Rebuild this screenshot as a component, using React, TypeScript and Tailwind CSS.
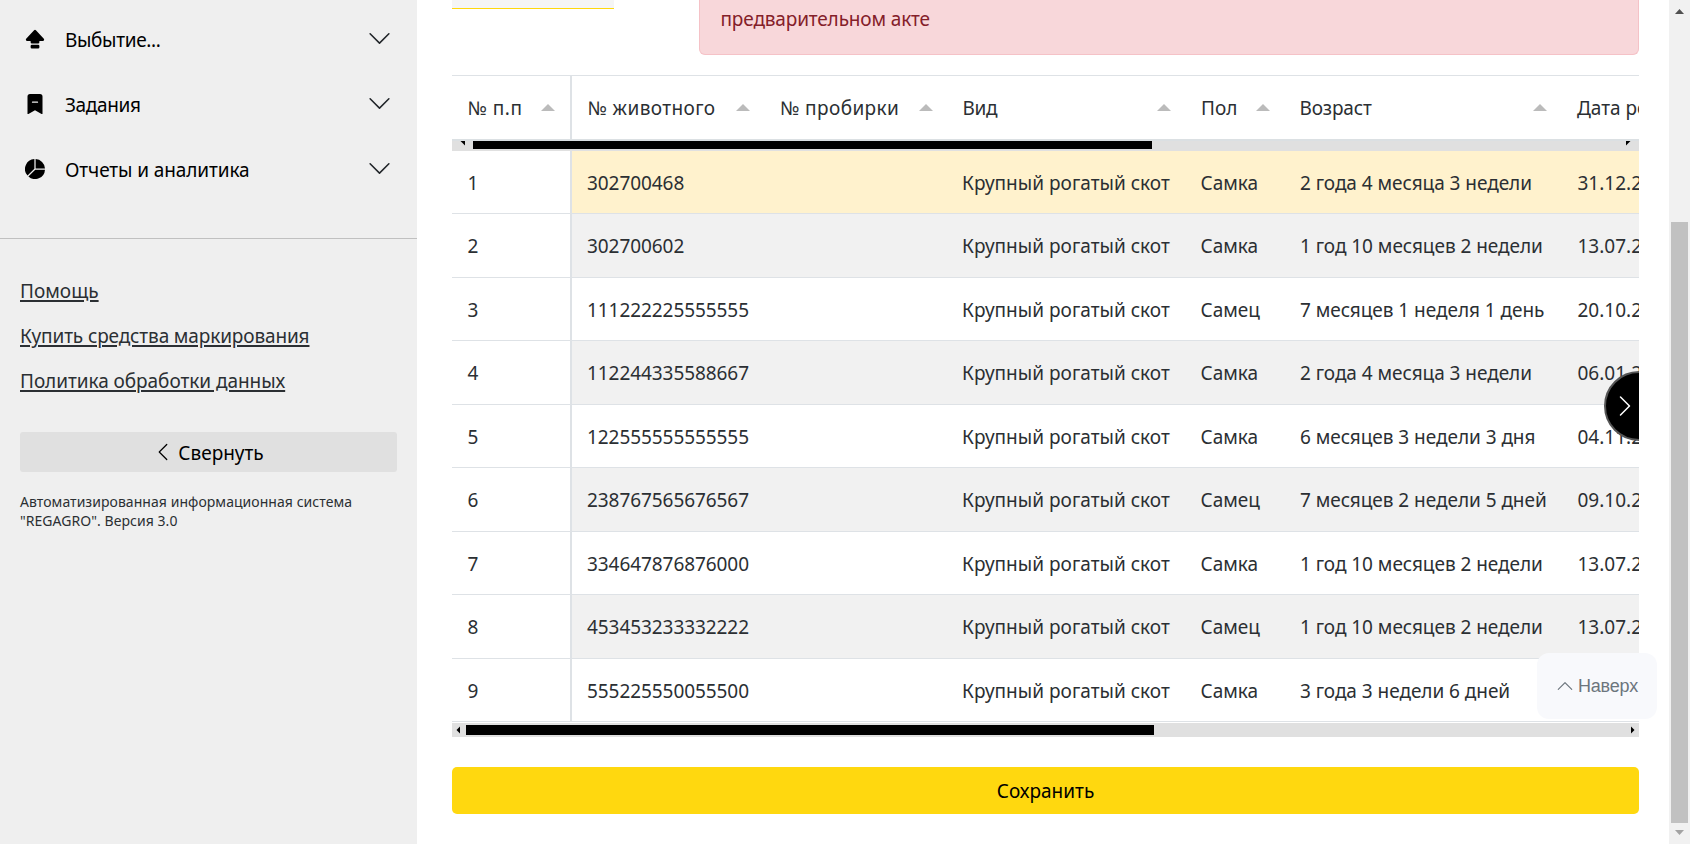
import type { ReactNode } from "react";
import {
  BsBookmarkDashFill,
  BsCapslockFill,
  BsChevronDown,
  BsChevronLeft,
  BsChevronRight,
  BsChevronUp,
  BsPieChartFill,
} from "react-icons/bs";

const menu: { icon: ReactNode; label: string; cls: string }[] = [
  { icon: <BsCapslockFill size={20} />, label: "Выбытие...", cls: "tracking-[-0.34px]" },
  { icon: <BsBookmarkDashFill size={20} />, label: "Задания", cls: "tracking-[-0.34px]" },
  { icon: <BsPieChartFill size={20} />, label: "Отчеты и аналитика", cls: "tracking-[-0.1px]" },
];

const links = [
  { label: "Помощь", cls: "tracking-[0.02px]" },
  { label: "Купить средства маркирования", cls: "tracking-[-0.13px]" },
  { label: "Политика обработки данных", cls: "tracking-[-0.05px]" },
];

const columns = [
  { label: "№ п.п", cls: "tracking-[0.5px]" },
  { label: "№ животного", cls: "tracking-[0.4px]" },
  { label: "№ пробирки", cls: "tracking-[0.4px]" },
  { label: "Вид", cls: "tracking-[-0.35px]" },
  { label: "Пол", cls: "" },
  { label: "Возраст", cls: "tracking-[-0.15px]" },
  { label: "Дата рождения", cls: "" },
];

const species = "Крупный рогатый скот";

const rows = [
  ["302700468", "Самка", "2 года 4 месяца 3 недели", "31.12.2021"],
  ["302700602", "Самка", "1 год 10 месяцев 2 недели", "13.07.2022"],
  ["111222225555555", "Самец", "7 месяцев 1 неделя 1 день", "20.10.2023"],
  ["112244335588667", "Самка", "2 года 4 месяца 3 недели", "06.01.2022"],
  ["122555555555555", "Самка", "6 месяцев 3 недели 3 дня", "04.11.2023"],
  ["238767565676567", "Самец", "7 месяцев 2 недели 5 дней", "09.10.2023"],
  ["334647876876000", "Самка", "1 год 10 месяцев 2 недели", "13.07.2022"],
  ["453453233332222", "Самец", "1 год 10 месяцев 2 недели", "13.07.2022"],
  ["555225550055500", "Самка", "3 года 3 недели 6 дней", ""],
];

const grid = "grid w-[1400px] grid-cols-[120px_192.5px_182.5px_238.5px_98.5px_277.5px_1fr]";

function Sidebar() {
  return (
    <aside className="flex h-full w-[417px] shrink-0 flex-col bg-[#efefef]">
      <nav className="flex h-[239px] flex-col border-b border-[#c0c0c0] pt-[7px] text-black">
        {menu.map((m) => (
          <div key={m.label} className="flex h-[65px] items-center px-[25px] pb-[2px]">
            {m.icon}
            <span className={`ml-5 flex-1 pt-1 ${m.cls}`}>{m.label}</span>
            <BsChevronDown size={25} className="text-[#212529]" />
          </div>
        ))}
      </nav>
      <div className="flex flex-col px-5 pt-[30px]">
        {links.map((l) => (
          <a
            key={l.label}
            className={`h-[45px] self-start leading-[45px] underline decoration-2 underline-offset-[2px] ${l.cls}`}
          >
            {l.label}
          </a>
        ))}
        <button className="mt-7 flex h-10 items-center justify-center rounded-[3px] bg-[#e0e0e0] text-black">
          <BsChevronLeft size={20} className="mr-[5px]" />
          <span className="pt-[3px]">Свернуть</span>
        </button>
        <p className="mt-5 text-[14px] leading-[19px] tracking-[0.05px]">
          Автоматизированная информационная система "REGAGRO". Версия 3.0
        </p>
      </div>
    </aside>
  );
}

function SortArrow() {
  return (
    <svg width="14" height="7" viewBox="0 0 14 7" className="shrink-0">
      <path d="M7 0L14 7H0Z" fill="#bbbbbb" />
    </svg>
  );
}

function AnimalTable() {
  return (
    <div className="relative mt-5 overflow-hidden">
      <div className={`${grid} h-16 border-t border-[#dee2e6]`}>
        {columns.map((c, i) => (
          <div
            key={c.label}
            className={`flex items-center justify-between pl-[15.5px] whitespace-nowrap ${
              i === 0 ? "border-r-2 border-[#dee2e6] pr-[15px]" : "pr-[14.5px]"
            }`}
          >
            <span className={`pt-[2px] ${c.cls}`}>{c.label}</span>
            <SortArrow />
          </div>
        ))}
      </div>
      <div className="flex h-3 items-start justify-between border-t-2 border-[#dbe0e3] bg-[#e0e0e0]">
        <svg width="21" height="8" viewBox="0 0 21 8">
          <path d="M8.5 0H13V4.5Z" />
        </svg>
        <div className="h-2 w-[679px] bg-black" />
        <div className="flex-1" />
        <svg width="13" height="8" viewBox="0 0 13 8">
          <path d="M0 0H4.5L0 4.5Z" />
        </svg>
      </div>
      <div className="-mt-[0.5px]">
        {rows.map(([num, sex, age, date], i) => {
          const bg = i === 0 ? "bg-[#fff2cd]" : i % 2 ? "bg-[#f1f1f1]" : "bg-white";
          return (
            <div
              key={i}
              className={`${grid} h-[63.5px] border-b border-[#dee2e6] whitespace-nowrap ${bg}`}
            >
              <div className="flex items-center border-r-2 border-[#dee2e6] bg-white pt-[2px] pl-[15.5px]">
                {i + 1}
              </div>
              <div className="flex items-center pt-[2px] pl-[15px] tracking-[-0.07px]">{num}</div>
              <div />
              <div className="flex items-center pt-[2px] pl-[15px] tracking-[0.02px]">{species}</div>
              <div className="flex items-center pt-[2px] pl-[15px]">{sex}</div>
              <div className="flex items-center pt-[2px] pl-4 tracking-[-0.04px]">{age}</div>
              <div className="flex items-center pt-[2px] pl-4">{date}</div>
            </div>
          );
        })}
      </div>
      <div className="mt-px flex h-3.5 items-center bg-[#e0e0e0]">
        <svg width="14" height="14" viewBox="0 0 14 14">
          <path d="M8 3.5V10.5L4.5 7Z" />
        </svg>
        <div className="h-2.5 w-[688px] bg-black" />
        <div className="flex-1" />
        <svg width="14" height="14" viewBox="0 0 14 14">
          <path d="M6 3.5V10.5L9.5 7Z" />
        </svg>
      </div>
      <button className="absolute top-[296px] -right-[35px] flex size-[70px] items-center rounded-full border-2 border-[#555555] bg-black pl-[7px] text-white">
        <BsChevronRight size={24} />
      </button>
    </div>
  );
}

export default function App() {
  return (
    <div className="relative flex h-[844px] w-[1690px] overflow-hidden bg-white font-['Noto_Sans','Liberation_Sans',sans-serif] text-[19px] text-[#2b2f33]">
      <Sidebar />
      <main className="flex w-[1252px] flex-col pr-[30px] pl-[35px]">
        <div className="flex h-[55px] items-start justify-between">
          <div className="h-[9px] w-[162px] border-b border-[#ffd80d] bg-[#f5f5f5]" />
          <div className="h-[55px] w-[940px] rounded-b-md border border-t-0 border-[#f5c2c7] bg-[#f8d7da] pl-[20.5px] leading-[38px] tracking-[-0.15px] text-[#842029]">
            предварительном акте
          </div>
        </div>
        <AnimalTable />
        <button className="mt-[30px] h-[47px] shrink-0 rounded-[5px] bg-[#ffd80f] pt-[2px] text-black">
          Сохранить
        </button>
      </main>
      <div className="flex w-[21px] flex-col items-center justify-between bg-[#f1f1f1] pt-[9px] pb-[9px]">
        <svg width="9" height="5" viewBox="0 0 9 5">
          <path d="M4.5 0L9 5H0Z" fill="#505050" />
        </svg>
        <div className="mt-[208px] mb-[7px] w-[17px] flex-1 bg-[#c1c1c1]" />
        <svg width="9" height="5" viewBox="0 0 9 5">
          <path d="M0 0H9L4.5 5Z" fill="#a3a3a3" />
        </svg>
      </div>
      <button className="absolute top-[653px] left-[1537px] flex h-[66px] w-[120px] items-center rounded-xl bg-[#f8f9fc] pl-[19px] font-['Liberation_Sans',sans-serif] text-[18px] text-[#6c757d]">
        <BsChevronUp size={18} className="mr-[4px]" />
        <span className="tracking-[-0.2px]">Наверх</span>
      </button>
    </div>
  );
}
